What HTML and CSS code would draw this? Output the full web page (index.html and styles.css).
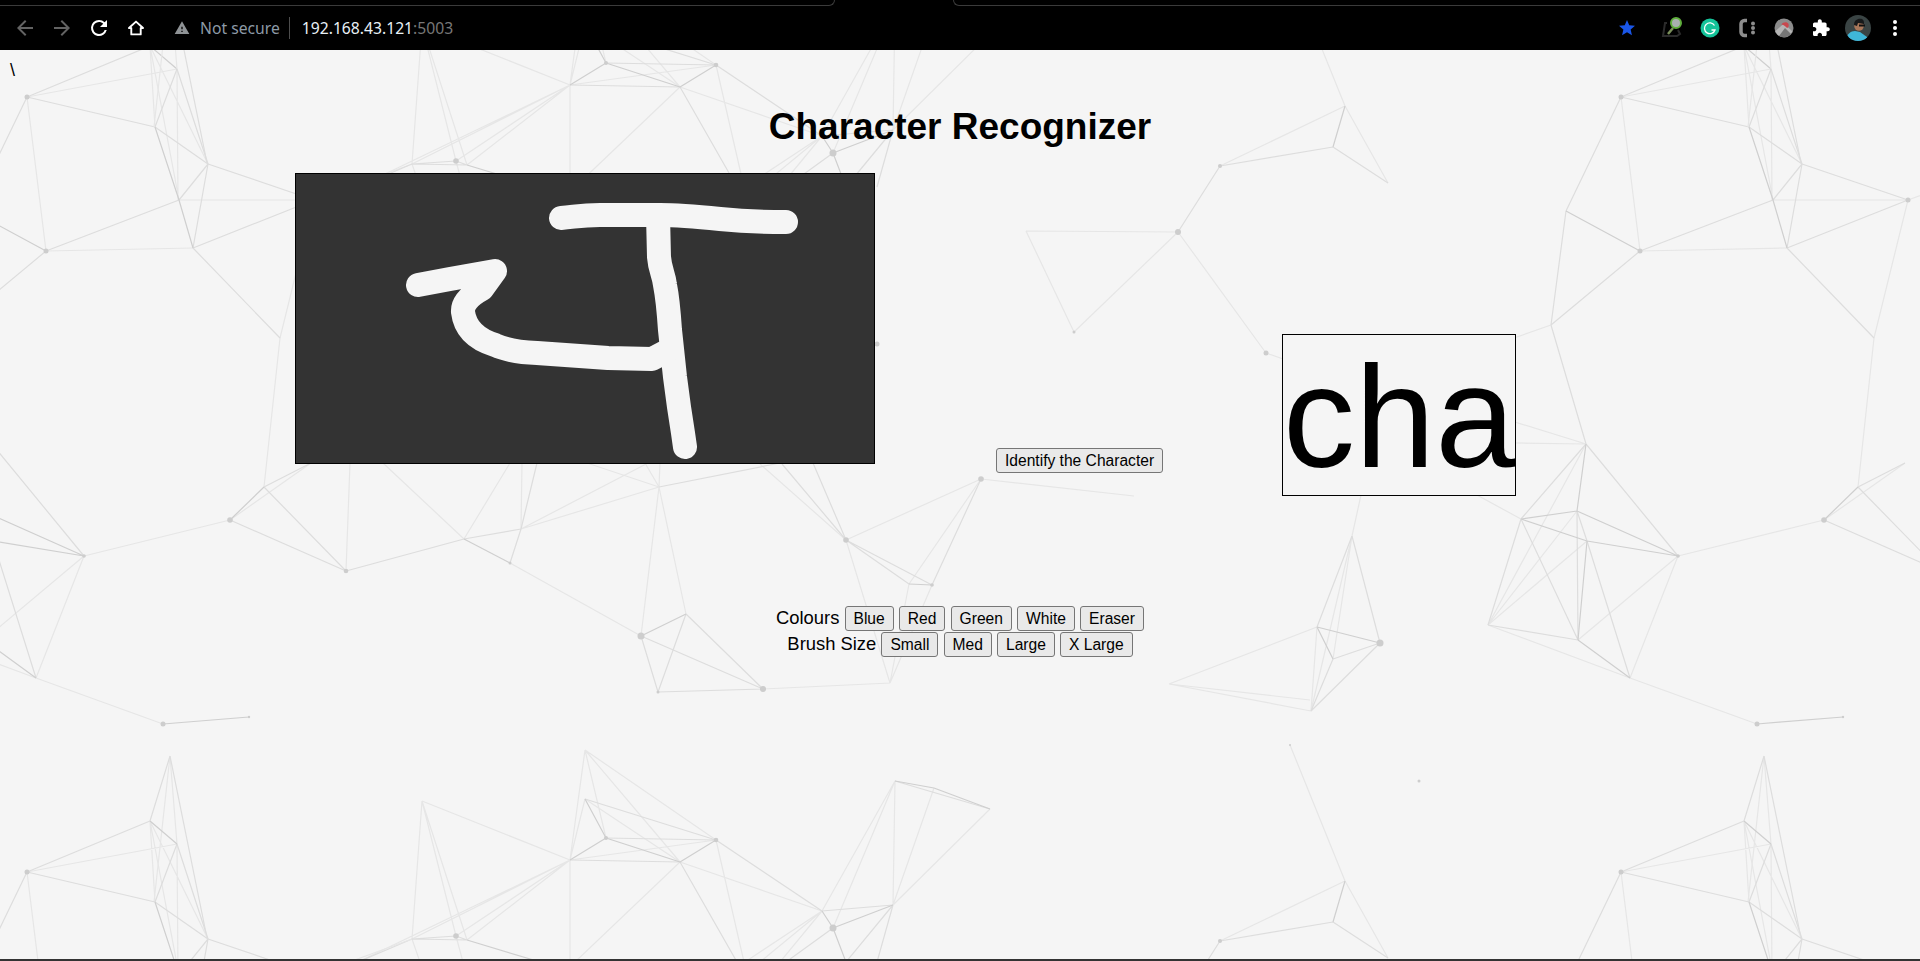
FILE: index.html
```html
<!DOCTYPE html>
<html lang="en">
<head>
    <meta charset="UTF-8">
    <meta name="viewport" content="width=device-width, initial-scale=1.0">
    <title>Character Recognizer</title>
    <link rel="stylesheet" href="styles.css">
</head>
<body>
    <!-- Browser chrome -->
    <div class="tabstrip">
        <div class="tab-edge tab-edge-left"></div>
        <div class="tab-edge tab-edge-right"></div>
    </div>
    <header class="toolbar">
        <svg class="icon icon-off" viewBox="0 0 24 24"><path d="M20 11H7.83l5.59-5.59L12 4l-8 8 8 8 1.41-1.41L7.83 13H20z"/></svg>
        <svg class="icon icon-off" viewBox="0 0 24 24"><path d="M12 4l-1.41 1.41L16.17 11H4v2h12.17l-5.58 5.59L12 20l8-8z"/></svg>
        <svg class="icon" viewBox="0 0 24 24"><path d="M17.65 6.35A7.95 7.95 0 0 0 12 4a8 8 0 1 0 7.75 10h-2.08A6 6 0 1 1 12 6c1.66 0 3.14.69 4.22 1.78L13 11h7V4z"/></svg>
        <svg class="icon" viewBox="-2 -2 28 28"><path class="home-outline" d="M12 4.5 3.8 12H6.5v7.5h11V12h2.7z"/></svg>

        <div class="omnibox">
            <svg class="warn" viewBox="0 0 24 24"><path d="M1 21h22L12 2 1 21zm12-3h-2v-2h2v2zm0-4h-2v-4h2v4z"/></svg>
            <span class="not-secure">Not secure</span>
            <span class="url"><span class="url-host">192.168.43.121</span>:5003</span>
        </div>

        <svg class="icon icon-star" viewBox="-3 -3 30 30"><path d="M12 17.27L18.18 21l-1.64-7.03L22 9.24l-7.19-.61L12 2 9.19 8.63 2 9.24l5.46 4.73L5.82 21z"/></svg>
        <div class="extensions">
            <svg class="icon" viewBox="0 0 24 24">
                <path d="M6 7H4L2 20h14l3-2-2-4" fill="none" stroke="#2b2b2b" stroke-width="2"/>
                <path d="M12 12 7 18" stroke="#7a8f5a" stroke-width="2.5"/>
                <circle cx="15" cy="7" r="5" fill="#a9b0b0" stroke="#5fae3c" stroke-width="2"/>
            </svg>
            <svg class="icon" viewBox="0 0 24 24">
                <circle cx="12" cy="12" r="9.5" fill="#15c39a"/>
                <path d="M16.5 9.5A5.4 5.4 0 1 0 17 14h-3.5" fill="none" stroke="#fff" stroke-width="1.3"/>
            </svg>
            <svg class="icon" viewBox="0 0 24 24">
                <path d="M12 4.5H9.500A3.500 3.500 0 0 0 6 8v8a3.500 3.500 0 0 0 3.500 3.500H12" fill="none" stroke="#8d8d8d" stroke-width="3.5"/>
                <circle cx="18" cy="7.500" r="2" fill="#8d8d8d"/>
                <circle cx="18" cy="12" r="2" fill="#8d8d8d"/>
                <circle cx="18" cy="16.500" r="2" fill="#8d8d8d"/>
            </svg>
            <svg class="icon" viewBox="0 0 24 24">
                <circle cx="12" cy="12" r="9.5" fill="#8c8c8c"/>
                <path d="M3.5 15 12 7.5 20 15v1a9.5 9.5 0 0 1-16.5 0z" fill="#b5b5b5"/>
                <path d="M9.5 8.5c1-2.5 6-3 7-.5 .7 1.800 0 3.500-1.500 4-1-1.500-3-3-5.500-3.500z" fill="#c8484e"/>
                <path d="M7 20 13 12l6 6a9.500 9.500 0 0 1-12 2z" fill="#767676"/>
            </svg>
            <svg class="icon" viewBox="-3 -3 30 30"><path d="M20.5 11H19V7c0-1.100-.9-2-2-2h-4V3.500C13 2.120 11.880 1 10.500 1S8 2.120 8 3.500V5H4c-1.100 0-1.990.9-1.990 2v3.800H3.500c1.490 0 2.700 1.210 2.700 2.700s-1.210 2.700-2.700 2.700H2V20c0 1.100.9 2 2 2h3.800v-1.500c0-1.490 1.210-2.700 2.700-2.700 1.490 0 2.700 1.210 2.700 2.700V22H17c1.100 0 2-.9 2-2v-4h1.500c1.380 0 2.500-1.120 2.500-2.500S21.880 11 20.500 11z"/></svg>
            <svg class="avatar" viewBox="0 0 26 26">
                <clipPath id="avatar-clip"><circle cx="13" cy="13" r="13"/></clipPath>
                <g clip-path="url(#avatar-clip)">
                    <rect width="26" height="26" fill="#3a4444"/>
                    <path d="M1 26c0-7 5-10 9-10l5 1 7 5 1 4z" fill="#3fb6d8"/>
                    <circle cx="14" cy="11" r="4.800" fill="#a8775a"/>
                    <path d="M9 10c0-5 4-7 8-6 2 1 2 3 2 5l-6-1-1 3z" fill="#17191a"/>
                    <rect x="14" y="9.500" width="6" height="2" fill="#111"/>
                </g>
            </svg>
            <svg class="icon" viewBox="0 0 24 24">
                <circle cx="12" cy="6" r="2"/><circle cx="12" cy="12" r="2"/><circle cx="12" cy="18" r="2"/>
            </svg>
        </div>
    </header>

    <main class="page">
        <!-- Wallpaper: one tile of the mesh, repeated -->
        <svg class="mesh" aria-hidden="true">
            <defs>
                <g id="tile" transform="translate(0,-50)">
                    <path class="mesh-faint" d="M27 97L177 69M27 97L46 251M177 69L178 200M150 46L179 200M150 46L155 127M150 46L208 164M46 251L193 248M179 200L314 200M314 200L280 338M280 338L264 487M314 200L412 164M-8 444L-144 402M-8 444L-144 442M-73 519L-130 488M-8 444L-106 625M-17 511L-106 625M-7 541L-106 625M-16 640L84 556M36 678L84 556M36 678L-106 625M36 678L163 724M84 556L230 520M230 520L311 463M346 571L350 463M464 539L383 463M464 539L510 463M521 529L522 463M521 529L659 487M521 529L648 463M659 487L645 463M659 487L587 463M659 487L660 463M659 487L641 636M659 487L686 614M510 563L641 636M763 689L890 683M760 464L846 540M846 540L981 479M909 584L981 479M909 584L890 683M932 585L890 683M846 540L890 683M981 479L1134 496M1352 536L1361 495M1352 536L1333 659M1352 536L1311 711M1317 627L1311 711M1169 684L1311 711M1169 684L1317 627M1169 684L1310 700M1345 106L1220 166M1345 106L1388 183M1178 232L1026 231M1026 231L1074 332M1074 332L1178 232M1178 232L1266 353M1266 353L1300 365M1290 745L1345 881M-43 325L-100 345"/>
                    <path class="mesh-faint" d="M170 756L177 844M170 756L154 902M422 801L412 939M422 801L456 936M422 801L467 940M422 801L570 860M456 936L463 962M467 940L570 860M412 939L570 860M456 936L570 860M412 939L420 962M570 860L358 962M585 750L606 838M585 750L570 860M585 750L716 840M585 750L680 862M585 799L570 860M585 799L680 862M570 860L716 840M570 860L570 962M716 840L744 962M680 862L822 911M680 862L575 962M822 911L745 962M822 911L760 962M822 911L780 962M822 911L895 781M833 928L895 781M893 905L895 781M893 905L934 788M893 905L990 809"/>
                    <path class="mesh-mid" d="M27 97L150 46M27 97L155 127M27 97L-28 211M-28 211L-43 325M46 251L-43 325M46 251L179 200M155 127L208 164M155 127L177 69M179 200L208 164M208 164L193 248M208 164L177 69M208 164L314 200M193 248L314 200M193 248L280 338M-43 325L-8 444M-8 444L-73 519M-8 444L84 556M-73 519L-16 640M-73 519L-106 625M-17 511L-7 541M-17 511L-16 640M-7 541L36 678M-16 640L-106 625M230 520L346 571M264 487L346 571M264 487L311 463M346 571L464 539M464 539L521 529M521 529L510 563M521 529L537 463M659 487L780 463M686 614L763 689M686 614L658 692M641 636L763 689M641 636L658 692M658 692L763 689M782 464L846 540M846 540L813 463M846 540L909 584M846 540L932 585M932 585L981 479M1352 536L1317 627M1352 536L1380 643M1380 643L1333 659M1380 643L1311 711M1333 659L1311 711M1333 147L1220 166M1333 147L1388 183M1220 166L1178 232"/>
                    <path class="mesh-mid" d="M170 756L150 821M170 756L207 938M412 939L456 936M412 939L467 940M456 936L467 940M412 939L358 962M585 799L716 840M606 838L716 840M570 860L680 862M680 862L737 962M716 840L822 911M822 911L893 905M833 928L786 962M893 905L877 962M893 905L846 962M895 781L990 809"/>
                    <path class="mesh-dark" d="M-28 211L46 251M155 127L179 200M179 200L193 248M150 46L177 69M-8 444L-17 511M-73 519L-17 511M-73 519L-7 541M-17 511L84 556M-7 541L84 556M-7 541L-16 640M-16 640L36 678M163 724L249 717M230 520L264 487M464 539L510 563M641 636L686 614M909 584L932 585M1317 627L1380 643M1317 627L1333 659M1345 106L1333 147"/>
                    <path class="mesh-dark" d="M467 940L540 962M585 799L606 838M606 838L680 862M606 838L570 860M680 862L716 840M822 911L833 928M893 905L833 928M833 928L846 962M895 781L934 788M934 788L990 809"/>
                    <g class="mesh-dots">
                        <circle cx="27" cy="97" r="2.500"/><circle cx="46" cy="251" r="2.500"/><circle cx="314" cy="200" r="2.500"/>
                        <circle cx="84" cy="556" r="1.800"/><circle cx="163" cy="724" r="2.500"/><circle cx="249" cy="717" r="1.200"/>
                        <circle cx="230" cy="520" r="2.800"/><circle cx="346" cy="571" r="2.300"/><circle cx="510" cy="563" r="1.500"/>
                        <circle cx="641" cy="636" r="3.500"/><circle cx="763" cy="689" r="3"/><circle cx="658" cy="692" r="1.500"/>
                        <circle cx="981" cy="479" r="2.800"/><circle cx="846" cy="540" r="2.800"/><circle cx="932" cy="585" r="1.800"/>
                        <circle cx="1380" cy="643" r="3.500"/><circle cx="1220" cy="166" r="2"/><circle cx="1178" cy="232" r="3"/>
                        <circle cx="1266" cy="353" r="2.500"/><circle cx="1074" cy="332" r="1.500"/><circle cx="877" cy="344" r="2.500"/>
                        <circle cx="1419" cy="781" r="1.500"/><circle cx="1290" cy="745" r="1"/><circle cx="456" cy="936" r="2.800"/>
                        <circle cx="606" cy="838" r="2"/><circle cx="716" cy="840" r="2.300"/><circle cx="833" cy="928" r="3.500"/>
                    </g>
                </g>
            </defs>
            <use href="#tile"/>
            <use href="#tile" x="1594"/>
            <use href="#tile" y="775"/>
            <use href="#tile" x="1594" y="775"/>
            <use href="#tile" y="-775"/>
            <use href="#tile" x="1594" y="-775"/>
        </svg>

        <div class="stray">\</div>
        <h1 class="title">Character Recognizer</h1>

        <section class="recognizer">
            <div class="canvas">
                <svg class="drawing" viewBox="296 174 578 289">
                    <path d="M561 218C575 217 580 215 600 215L660 215C680 215 700 217 720 219C740 221 760 222 786 222"/>
                    <path d="M658 215L659 257C660 270 664 275 665 285C668 300 669 315 670 330L675 377L679 407L683 433L685 447"/>
                    <path d="M418 285L450 279L495 271L482 289Q462 300 463 312Q466 336 495 345Q510 352 537 353L608 358L652 359L669 350"/>
                </svg>
            </div>
            <button class="btn btn-identify">Identify the Character</button>
            <div class="result">cha</div>
        </section>

        <section class="tools">
            <div class="tool-row">
                Colours
                <button class="btn">Blue</button>
                <button class="btn">Red</button>
                <button class="btn">Green</button>
                <button class="btn">White</button>
                <button class="btn">Eraser</button>
            </div>
            <div class="tool-row">
                Brush Size
                <button class="btn">Small</button>
                <button class="btn">Med</button>
                <button class="btn">Large</button>
                <button class="btn">X Large</button>
            </div>
        </section>
    </main>
    <div class="window-edge"></div>
</body>
</html>
```

FILE: styles.css
```css
* {
    box-sizing: border-box;
}

body {
    margin: 0;
    height: 100vh;
    display: flex;
    flex-direction: column;
    overflow: hidden;
    background: #f5f5f5;
    font-family: "Liberation Sans", Arial, sans-serif;
    color: #000;
}

/* Browser chrome */
.tabstrip {
    height: 6px;
    flex: none;
    display: flex;
    justify-content: space-between;
    background: #000;
}

.tab-edge {
    height: 6px;
    border-bottom: 1px solid #3b3b3b;
}

.tab-edge-left {
    width: 835px;
    border-right: 1px solid #3b3b3b;
    border-bottom-right-radius: 6px;
}

.tab-edge-right {
    width: 967px;
    border-left: 1px solid #3b3b3b;
    border-bottom-left-radius: 6px;
}

.toolbar {
    height: 44px;
    flex: none;
    display: flex;
    align-items: center;
    gap: 13px;
    padding: 0 13px;
    background: #000;
}

.icon {
    width: 24px;
    height: 24px;
    flex: none;
    fill: #fff;
}

.icon-off {
    fill: #636363;
}

.home-outline {
    fill: none;
    stroke: #fff;
    stroke-width: 2.2;
    stroke-linejoin: round;
}

.icon-star {
    fill: #1a56e8;
}

.omnibox {
    flex: 1;
    display: flex;
    align-items: center;
    margin-left: 13px;
    padding-bottom: 1px;
    font-family: "Noto Sans", sans-serif;
    font-size: 15.7px;
}

.warn {
    width: 16px;
    height: 16px;
    fill: #8f9396;
    margin-right: 10px;
}

.not-secure {
    color: #8d9aa6;
    padding-right: 9px;
    margin-right: 12px;
    border-right: 1px solid #4d4d4d;
}

.url {
    color: #777;
}

.url-host {
    color: #e8f0f6;
}

.extensions {
    display: flex;
    align-items: center;
    gap: 13px;
    margin-left: 9px;
}

.avatar {
    width: 26px;
    height: 26px;
    flex: none;
    margin: 0 -1px;
}

/* Page */
.page {
    position: relative;
    flex: 1;
    padding: 8px;
    overflow: hidden;
}

.mesh {
    position: absolute;
    top: 0;
    left: 0;
    width: 100%;
    height: 100%;
    fill: none;
    stroke-width: 1.2;
    filter: blur(0.4px);
}

.mesh-faint {
    stroke: #e6e6e6;
}

.mesh-mid {
    stroke: #dddddd;
}

.mesh-dark {
    stroke: #cfcfcf;
}

.mesh-dots {
    fill: #cdcdcd;
    stroke: none;
}

.stray,
.title,
.recognizer,
.tools {
    position: relative;
}

.stray {
    height: 18px;
    margin-top: 2px;
    padding-left: 2px;
    font-size: 18px;
    line-height: 21px;
}

.title {
    margin: 28px 0 25px;
    font-size: 37px;
    line-height: 42px;
    text-align: center;
}

.recognizer {
    display: flex;
    align-items: flex-end;
    gap: 121px;
    padding-left: 287px;
}

.canvas {
    width: 580px;
    height: 291px;
    margin-bottom: 32px;
    background: #333;
    border: 1px solid #000;
}

.drawing {
    display: block;
    width: 100%;
    height: 100%;
    fill: none;
    stroke: #f5f5f5;
    stroke-width: 24;
    stroke-linecap: round;
    stroke-linejoin: round;
}

.result {
    width: 234px;
    height: 162px;
    margin-left: -2px;
    overflow: hidden;
    background: #f5f5f5;
    border: 1px solid #000;
    font-size: 144px;
    line-height: 165px;
    white-space: nowrap;
}

.btn {
    height: 25px;
    padding: 0 8px;
    background: #e9e9e9;
    border: 1px solid #767676;
    border-radius: 3px;
    font-family: "Liberation Sans", Arial, sans-serif;
    font-size: 15.6px;
    color: #000;
}

.btn-identify {
    flex: none;
    margin-bottom: 23px;
}

.tools {
    margin-top: 110px;
    font-size: 18.4px;
    text-align: center;
}

.tool-row {
    height: 26px;
}

.window-edge {
    height: 2px;
    flex: none;
    background: #333;
}
```
